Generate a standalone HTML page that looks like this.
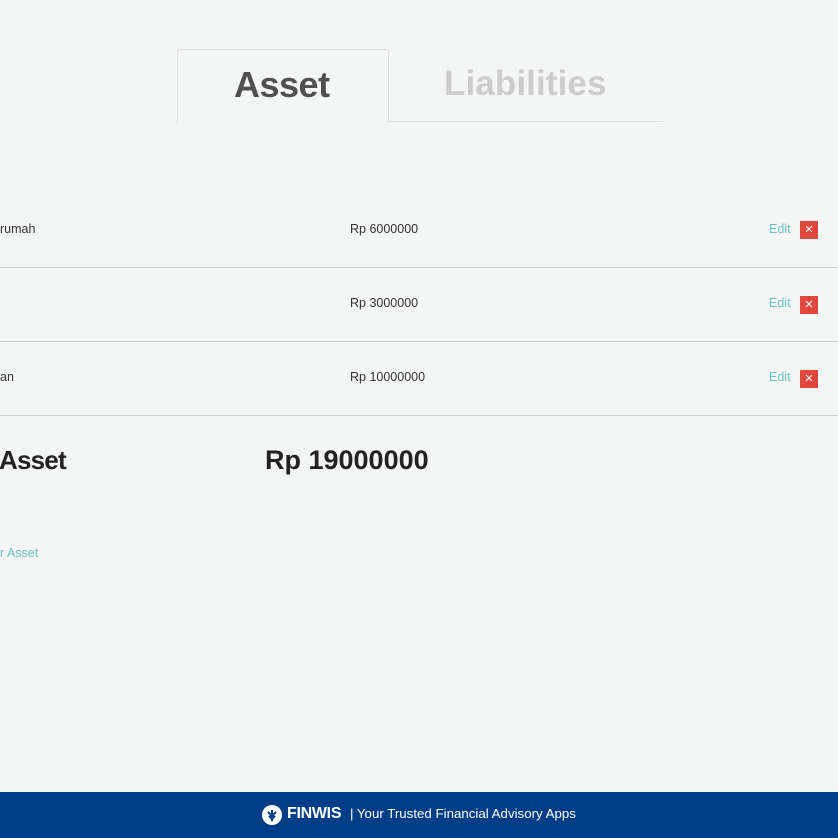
<!DOCTYPE html>
<html><head><meta charset="utf-8"><style>
body{margin:0;width:838px;height:838px;background:#f4f6f5;font-family:"Liberation Sans",sans-serif;position:relative;overflow:hidden}
.a{position:absolute;white-space:nowrap}
.tab{position:absolute;left:177px;top:49px;width:210px;height:73px;border:1px solid #ddd;border-bottom:none;border-radius:3px 3px 0 0;background:#f4f6f5}
.line{position:absolute;left:387px;top:121px;width:276px;height:1px;background:#ddd}
.t{font-size:36px;font-weight:bold;top:64px}
.row{position:absolute;left:0;width:838px;height:1px;background:#ccc}
.s{font-size:12.5px;color:#333}
.e{font-size:12.5px;color:#6cc3c3}
.x{position:absolute;width:18px;height:18px;background:#e0473d;color:#fff;font-size:11px;text-align:center;line-height:18px}
.foot{position:absolute;left:0;top:792px;width:838px;height:46px;background:#003d87;color:#fff}
</style></head><body>
<div class="tab"></div><div class="line"></div>
<div class="a t" style="left:234px;color:#505050;letter-spacing:-0.5px">Asset</div>
<div class="a t" style="left:444px;color:#ccc;font-size:35px;letter-spacing:0.1px">Liabilities</div>

<div class="a s" style="left:0;top:222px">rumah</div>
<div class="a s" style="left:350px;top:222px">Rp 6000000</div>
<div class="a e" style="left:769px;top:222px">Edit</div>
<div class="x" style="left:800px;top:221px">✕</div>
<div class="row" style="top:267px"></div>

<div class="a s" style="left:350px;top:296px">Rp 3000000</div>
<div class="a e" style="left:769px;top:296px">Edit</div>
<div class="x" style="left:800px;top:296px">✕</div>
<div class="row" style="top:341px"></div>

<div class="a s" style="left:0;top:370px">an</div>
<div class="a s" style="left:350px;top:370px">Rp 10000000</div>
<div class="a e" style="left:769px;top:370px">Edit</div>
<div class="x" style="left:800px;top:370px">✕</div>
<div class="row" style="top:415px"></div>

<div class="a" style="left:-1px;top:445px;font-size:26px;font-weight:bold;color:#222;letter-spacing:-0.8px">Asset</div>
<div class="a" style="left:265px;top:445px;font-size:27px;font-weight:bold;color:#222">Rp 19000000</div>
<div class="a e" style="left:0;top:546px">r Asset</div>

<div class="foot">
<svg class="a" style="left:262px;top:13px" width="20" height="20" viewBox="0 0 20 20"><circle cx="10" cy="10" r="10" fill="#fff"/><path d="M10 5v11M6 7l4 4 4-4M7 11l3 3 3-3" stroke="#003d87" stroke-width="2" fill="none"/></svg>
<div class="a" style="left:287px;top:13px;font-size:16px;font-weight:bold;letter-spacing:-0.3px">FINWIS</div>
<div class="a" style="left:350px;top:14px;font-size:13.3px">| Your Trusted Financial Advisory Apps</div>
</div>
</body></html>
